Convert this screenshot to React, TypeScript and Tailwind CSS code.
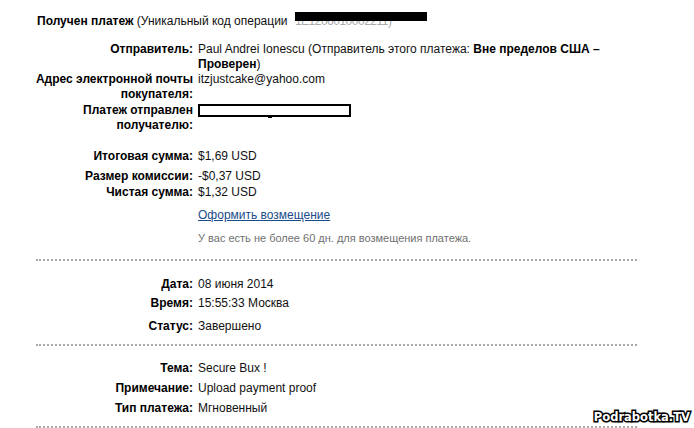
import React from "react";

type Row = { label: React.ReactNode; value: React.ReactNode; className?: string };

function Rows({ rows }: { rows: Row[] }) {
  return (
    <div className="-ml-[24px]">
      {rows.map((r, i) => (
        <div key={i} className={"flex " + (r.className ?? "")}>
          <div className="w-[181px] shrink-0 text-right font-bold text-black whitespace-nowrap">{r.label}</div>
          <div className="ml-[5px] w-[439px]">{r.value}</div>
        </div>
      ))}
    </div>
  );
}

function Dots() {
  return <div className="h-0 border-t-2 border-dotted border-[#a8a8a8]" />;
}

export default function App() {
  return (
    <div className="relative w-[694px] h-[428px] overflow-hidden bg-white font-['Liberation_Sans',Arial,sans-serif] text-[12px] leading-[15px] text-[#111]">
      <div className="w-[601px] ml-[36px]">
        <div className="pt-[14px] pl-px whitespace-nowrap">
          <span className="font-bold text-black">Получен платеж</span> (Уникальный код операции{" "}
          <span className="relative inline-block ml-[4px] text-[#aaa] tracking-[-0.5px]">
            1E1206010002211)
            <span className="absolute left-0 top-[-2px] w-[132px] h-[9px] bg-black" />
          </span>
        </div>

        <Rows
          rows={[
            {
              label: "Отправитель:",
              className: "mt-[13px]",
              value: (
                <>
                  Paul Andrei Ionescu (Отправитель этого платежа:{" "}
                  <span className="font-bold text-black">Вне пределов США – Проверен</span>)
                </>
              ),
            },
            {
              label: (
                <>
                  Адрес электронной почты
                  <br />
                  покупателя:
                </>
              ),
              value: "itzjustcake@yahoo.com",
            },
            {
              label: (
                <>
                  Платеж отправлен
                  <br />
                  получателю:
                </>
              ),
              className: "mt-px",
              value: (
                <span className="relative inline-block w-[153px] h-[13px] mt-px border-2 border-black">
                  <span className="absolute left-[68px] top-[9px] w-[4px] h-[3px] bg-black" />
                </span>
              ),
            },
            { label: "Итоговая сумма:", value: "$1,69 USD", className: "mt-[16px]" },
            { label: "Размер комиссии:", value: "-$0,37 USD", className: "mt-[5px]" },
            { label: "Чистая сумма:", value: "$1,32 USD", className: "mt-px" },
          ]}
        />
        <div className="ml-[162px] mt-[8px]">
          <a href="#" className="text-[#1a4b8a] underline">
            Оформить возмещение
          </a>
        </div>
        <div className="ml-[162px] mt-[8px] text-[11px] leading-[14px] text-[#707070]">
          У вас есть не более 60 дн. для возмещения платежа.
        </div>
        <div className="mt-[14px]">
          <Dots />
        </div>

        <Rows
          rows={[
            { label: "Дата:", value: "08 июня 2014", className: "mt-[16px]" },
            { label: "Время:", value: "15:55:33 Москва", className: "mt-[4px]" },
            { label: "Статус:", value: "Завершено", className: "mt-[8px]" },
          ]}
        />
        <div className="mt-[10px]">
          <Dots />
        </div>

        <Rows
          rows={[
            { label: "Тема:", value: "Secure Bux !", className: "mt-[15px]" },
            { label: "Примечание:", value: "Upload payment proof", className: "mt-[5px]" },
            { label: "Тип платежа:", value: "Мгновенный", className: "mt-[5px]" },
          ]}
        />
        <div className="mt-[10px]">
          <Dots />
        </div>
      </div>

      <div className="absolute right-[4px] bottom-[4px] font-['DejaVu_Sans',sans-serif] font-bold text-[11.5px] leading-[13px] text-white [-webkit-text-stroke:3px_#000] [paint-order:stroke_fill]">
        Podrabotka.TV
      </div>
    </div>
  );
}
